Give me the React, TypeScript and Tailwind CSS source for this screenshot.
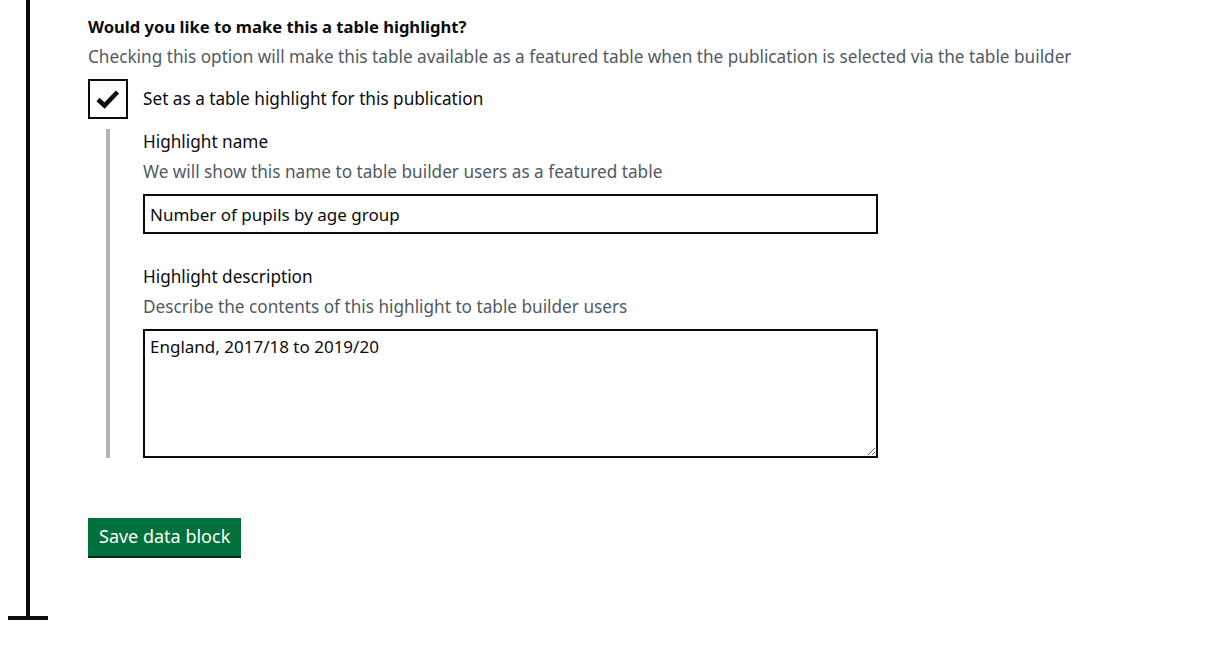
export default function App() {
	return (
		<div className="relative h-[654px] w-[1226px] bg-white font-['Noto_Sans',sans-serif] text-[#0b0c0c]">
			<div className="absolute left-[26px] top-0 h-[620px] w-[4px] bg-[#0b0c0c]" />
			<div className="absolute left-[8px] top-[616px] h-[4px] w-[40px] bg-[#0b0c0c]" />

			<div className="pl-[88px] pt-[15px]">
				<p className="text-[16.6px] font-bold leading-[24px]">
					Would you like to make this a table highlight?
				</p>
				<p className="mt-[6px] text-[17.2px] leading-[24px] text-[#505a5f]">
					Checking this option will make this table available as a featured table when the publication is selected via the table builder
				</p>

				<label className="mt-[10px] flex items-center gap-[15px]">
					<span className="flex h-[40px] w-[40px] items-center justify-center border-2 border-[#0b0c0c]">
						<svg width="24" height="20" viewBox="0 0 24 20">
							<path d="M2 10.5 L8.5 16.5 L21.5 3" fill="none" stroke="#0b0c0c" strokeWidth="4.5" />
						</svg>
					</span>
					<span className="text-[17.2px] leading-[24px]">Set as a table highlight for this publication</span>
				</label>

				<div className="ml-[18px] mt-[10px] flex">
					<div className="w-[4px] bg-[#b1b4b6]" />
					<div className="pl-[33px]">
						<p className="pt-[1px] text-[17.2px] leading-[24px]">Highlight name</p>
						<p className="mt-[6px] text-[17.2px] leading-[24px] text-[#505a5f]">
							We will show this name to table builder users as a featured table
						</p>
						<input
							className="mt-[10px] block h-[40px] w-[735px] border-2 border-[#0b0c0c] px-[5px] text-[17px] outline-none"
							defaultValue="Number of pupils by age group"
						/>

						<p className="mt-[31px] text-[17.2px] leading-[24px]">Highlight description</p>
						<p className="mt-[6px] text-[17.2px] leading-[24px] text-[#505a5f]">
							Describe the contents of this highlight to table builder users
						</p>
						<textarea
							className="mt-[10px] block h-[129px] w-[735px] border-2 border-[#0b0c0c] px-[5px] py-[4px] text-[17px] leading-[24px] outline-none"
							defaultValue="England, 2017/18 to 2019/20"
						/>
					</div>
				</div>

				<button className="mt-[60px] bg-[#00703c] px-[11px] pb-[8px] pt-[7px] text-[18px] leading-[23px] text-white shadow-[0_2px_0_#002d18]">
					Save data block
				</button>
			</div>
		</div>
	);
}
